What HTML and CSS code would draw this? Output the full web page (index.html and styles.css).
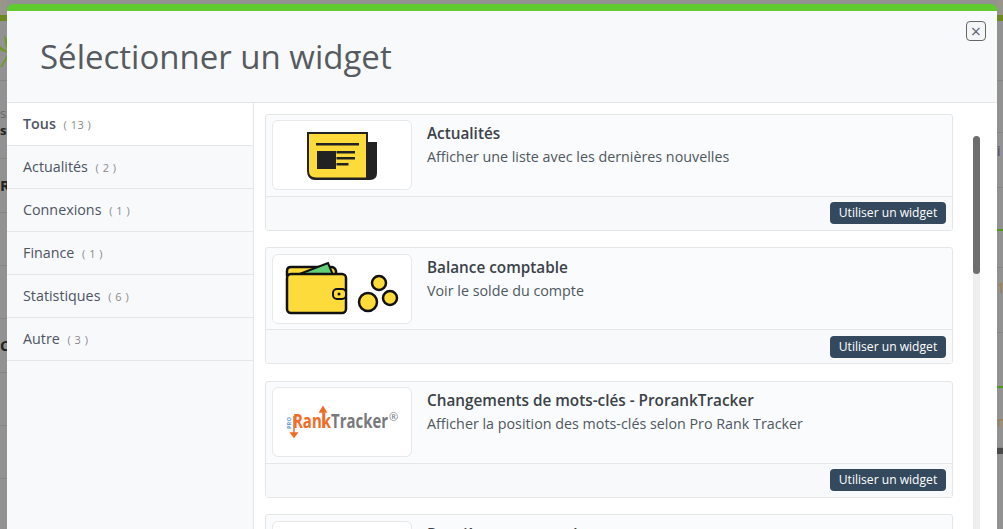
FILE: index.html
```html
<!DOCTYPE html>
<html lang="fr">
<head>
  <meta charset="UTF-8">
  <title>Sélectionner un widget</title>
  <link rel="stylesheet" href="styles.css">
</head>
<body>

  <div class="page-edge page-edge-left">
    <div class="edge-row edge-logo">
      <svg class="edge-leaf" width="7" height="40" viewBox="0 0 7 40">
        <path d="M4 0L7 4V14L5 10ZM0 11L7 16V18L0 15ZM0 32L7 20V24L2 32Z" fill="#6f9a2c"/>
      </svg>
    </div>
    <div class="edge-row edge-h1"><span class="edge-small">sh</span><b>st</b></div>
    <div class="edge-row edge-h2"><b>R</b></div>
    <div class="edge-row edge-h3"></div>
    <div class="edge-row edge-h3"></div>
    <div class="edge-row edge-h4"><b>C</b></div>
    <div class="edge-row edge-h3"></div>
    <div class="edge-row edge-h3"></div>
  </div>

  <div class="modal">
    <div class="modal-header">
      <h1 class="modal-title">Sélectionner un widget</h1>
      <button class="close-btn">&times;</button>
    </div>

    <div class="modal-body">
      <div class="sidebar">
        <div class="cat active">Tous <span class="count">( 13 )</span></div>
        <div class="cat">Actualités <span class="count">( 2 )</span></div>
        <div class="cat">Connexions <span class="count">( 1 )</span></div>
        <div class="cat">Finance <span class="count">( 1 )</span></div>
        <div class="cat">Statistiques <span class="count">( 6 )</span></div>
        <div class="cat">Autre <span class="count">( 3 )</span></div>
      </div>

      <div class="widget-list">
        <div class="widget">
          <div class="widget-body">
            <div class="widget-img">
              <svg width="138" height="68" viewBox="0 0 138 68">
                <path d="M92 21H104V52Q104 59 97 59H42Q35 59 35 52V30Z" fill="#222"/>
                <path d="M35 12H94V57.500H43Q35 57.500 35 50Z" fill="#fddb3a" stroke="#222" stroke-width="2"/>
                <rect x="43" y="22" width="43" height="2.500" fill="#222"/>
                <rect x="44" y="30" width="19" height="18" fill="#222"/>
                <rect x="63.500" y="30" width="18.500" height="2.500" fill="#222"/>
                <rect x="63.500" y="36" width="18.500" height="2.500" fill="#222"/>
                <rect x="63.500" y="42" width="12" height="2.500" fill="#222"/>
              </svg>
            </div>
            <div class="widget-text">
              <div class="widget-name">Actualités</div>
              <div class="widget-desc">Afficher une liste avec les dernières nouvelles</div>
            </div>
          </div>
          <div class="widget-footer"><button class="use-btn">Utiliser un widget</button></div>
        </div>

        <div class="widget">
          <div class="widget-body">
            <div class="widget-img">
              <svg width="138" height="68" viewBox="0 0 138 68">
                <path d="M14 20V16Q14 12 18 12H58Q62 12 63 16V20Z" fill="#fddb3a" stroke="#111" stroke-width="2.500"/>
                <path d="M24 20L55 8L60 20Z" fill="#5fcf78" stroke="#111" stroke-width="2"/>
                <rect x="14" y="19" width="59" height="39" rx="4" fill="#fddb3a" stroke="#111" stroke-width="2.500"/>
                <rect x="60" y="34" width="13" height="10" rx="4" fill="#fddb3a" stroke="#111" stroke-width="2"/>
                <circle cx="66" cy="39" r="1.500" fill="#111"/>
                <circle cx="106" cy="28" r="7" fill="#fddb3a" stroke="#111" stroke-width="2.500"/>
                <circle cx="95" cy="47" r="9" fill="#fddb3a" stroke="#111" stroke-width="2.500"/>
                <circle cx="117" cy="43" r="7" fill="#fddb3a" stroke="#111" stroke-width="2.500"/>
              </svg>
            </div>
            <div class="widget-text">
              <div class="widget-name">Balance comptable</div>
              <div class="widget-desc">Voir le solde du compte</div>
            </div>
          </div>
          <div class="widget-footer"><button class="use-btn">Utiliser un widget</button></div>
        </div>

        <div class="widget">
          <div class="widget-body">
            <div class="widget-img">
              <svg width="138" height="68" viewBox="0 0 138 68">
                <text class="logo-pro" transform="translate(18 41) rotate(-90)" textLength="12" lengthAdjust="spacingAndGlyphs">PRO</text>
                <path d="M21 28V47M18 45L21 49L24 45Z" fill="#f26b21" stroke="#f26b21" stroke-width="1.500"/>
                <path d="M50 40V22M47 24L50 19L53 24Z" fill="#f26b21" stroke="#f26b21" stroke-width="1.500"/>
                <text class="logo-rank" x="20" y="40" textLength="38" lengthAdjust="spacingAndGlyphs">Rank</text>
                <text class="logo-tracker" x="58" y="40" textLength="57" lengthAdjust="spacingAndGlyphs">Tracker</text>
                <text class="logo-reg" x="116" y="33">®</text>
              </svg>
            </div>
            <div class="widget-text">
              <div class="widget-name">Changements de mots-clés - ProrankTracker</div>
              <div class="widget-desc">Afficher la position des mots-clés selon Pro Rank Tracker</div>
            </div>
          </div>
          <div class="widget-footer"><button class="use-btn">Utiliser un widget</button></div>
        </div>

        <div class="widget">
          <div class="widget-body">
            <div class="widget-img"></div>
            <div class="widget-text">
              <div class="widget-name">Dernières commandes</div>
            </div>
          </div>
        </div>
      </div>

      <div class="scroll-track"><div class="scroll-thumb"></div></div>
    </div>
  </div>

  <div class="page-edge page-edge-right">
    <div class="edge-row edge-logo"></div>
    <div class="edge-row edge-r1"></div>
    <div class="edge-row edge-r2"><span class="edge-letter">i</span></div>
    <div class="edge-row edge-r3 edge-green"></div>
    <div class="edge-row edge-r4"></div>
    <div class="edge-row edge-r5"><span class="edge-letter edge-orange">1</span></div>
    <div class="edge-row edge-r6 edge-green"></div>
    <div class="edge-row edge-r7"><span class="edge-letter edge-orange">n</span></div>
    <div class="edge-dark"></div>
  </div>

</body>
</html>
```

FILE: styles.css
```css
html, body {
  height: 100%;
}
body {
  margin: 0;
  display: flex;
  overflow: hidden;
  background-color: #929292;
  font-family: "Open Sans", sans-serif;
  color: #444b52;
}

/* what shows of the page under the modal */
.page-edge {
  flex: none;
  overflow: hidden;
  padding-top: 15px;
  background: linear-gradient(#98968a 0, #98968a 15px, #929292 15px);
}
.page-edge-left {
  width: 7px;
  direction: rtl;
}
.page-edge-right {
  width: 6px;
}
.edge-row {
  box-sizing: border-box;
  border-bottom: 1px solid #858585;
  white-space: nowrap;
  direction: ltr;
}
.edge-logo {
  height: 66px;
  border-top: 6px solid #6f8a1c;
}
.edge-leaf {
  display: block;
  margin-top: 14px;
}
.edge-h1 { height: 78px; padding-top: 25px; font-size: 13px; line-height: 14px; }
.edge-h2 { height: 54px; padding-top: 16px; font-size: 15px; line-height: 20px; }
.edge-h3 { height: 53px; }
.edge-h4 { height: 54px; padding-top: 16px; font-size: 15px; line-height: 20px; }
.edge-row b {
  display: block;
  color: #222;
}
.edge-small {
  display: block;
  margin-bottom: 3px;
  color: #666;
}
.edge-r1 { height: 52px; }
.edge-r2 { height: 55px; padding-top: 6px; }
.edge-r3 { height: 43px; }
.edge-r4 { height: 37px; }
.edge-r5 { height: 65px; padding-top: 8px; }
.edge-r6 { height: 55px; }
.edge-r7 { height: 60px; padding-top: 22px; }
.edge-letter {
  font-size: 14px;
  line-height: 20px;
  color: #4a4a66;
}
.edge-orange {
  color: #a8793c;
}
.edge-green {
  border-bottom: 2px solid #4f9a1e;
}
.edge-dark {
  height: 6px;
  background-color: #4a4a4a;
}

/* modal */
.modal {
  flex: 1;
  display: flex;
  flex-direction: column;
  margin-top: 4px;
  background-color: #fff;
  border-top: 7px solid #5fcb2e;
  border-radius: 6px 6px 0 0;
  overflow: hidden;
}
.modal-header {
  flex: none;
  display: flex;
  justify-content: space-between;
  align-items: flex-start;
  height: 91px;
  box-sizing: border-box;
  padding: 10px 11px 0 33px;
  background-color: #f8f9fa;
}
.modal-title {
  margin: 0;
  padding-top: 12px;
  font-size: 33px;
  line-height: 48px;
  font-weight: 400;
  color: #555b60;
}
.close-btn {
  width: 20px;
  height: 20px;
  padding: 0;
  background-color: #f3f5f7;
  border: 1px solid #666;
  border-radius: 4px;
  color: #667;
  font-family: "Open Sans", sans-serif;
  font-size: 18px;
  line-height: 16px;
}
.modal-body {
  flex: 1;
  display: flex;
  min-height: 0;
  border-top: 1px solid #e4e6e8;
}

/* categories */
.sidebar {
  flex: none;
  width: 247px;
  box-sizing: border-box;
  background-color: #f8f9fb;
  border-right: 1px solid #e4e6e8;
}
.cat {
  height: 43px;
  box-sizing: border-box;
  padding: 11px 16px 0;
  border-bottom: 1px solid #e4e6e8;
  font-size: 14.300px;
  line-height: 20px;
  color: #4d5563;
}
.cat.active {
  background-color: #fff;
  font-weight: 600;
}
.count {
  margin-left: 4px;
  font-size: 11px;
  font-weight: 400;
  letter-spacing: 0.500px;
  color: #8a8a8a;
}

/* widgets */
.widget-list {
  flex: 1;
  overflow: hidden;
  padding-top: 10.600px;
  padding-left: 11px;
}
.widget {
  height: 117px;
  box-sizing: border-box;
  margin-bottom: 16.500px;
  border: 1px solid #e4e6e8;
  border-radius: 3px;
  background-color: #f9fbfd;
}
.widget-body {
  display: flex;
  height: 82px;
  box-sizing: border-box;
  padding: 5.500px 6px;
  border-bottom: 1px solid #e4e6e8;
}
.widget-img {
  flex: none;
  width: 140px;
  height: 70px;
  box-sizing: border-box;
  background-color: #fff;
  border: 1px solid #e6e8ea;
  border-radius: 6px;
}
.widget-img svg {
  display: block;
}
.widget-text {
  padding: 3px 0 0 15px;
}
.widget-name {
  font-size: 15.300px;
  line-height: 20px;
  font-weight: 600;
  color: #3c4248;
}
.widget-desc {
  margin-top: 4px;
  font-size: 14.300px;
  line-height: 20px;
  color: #4f5860;
}
.widget-footer {
  display: flex;
  justify-content: flex-end;
  height: 33px;
  box-sizing: border-box;
  padding: 5.450px 6px 0 0;
  background-color: #f8f9fa;
}
.use-btn {
  width: 116px;
  height: 22px;
  padding: 0 0 1px;
  border: none;
  border-radius: 4px;
  background-color: #34495e;
  color: #fff;
  font-family: "Open Sans", sans-serif;
  font-size: 12.100px;
}

.scroll-track {
  flex: none;
  width: 7px;
  margin: 33px 17px 0 20px;
  background-color: #eee;
  border-radius: 4px 4px 0 0;
}
.scroll-thumb {
  height: 138px;
  background-color: #6e6e6e;
  border-radius: 4px;
}

/* logo text */
.logo-pro {
  font: bold 5px "Open Sans", sans-serif;
  fill: #5aa0dc;
}
.logo-rank {
  font: bold 19px "Open Sans", sans-serif;
  fill: #f26b21;
}
.logo-tracker {
  font: bold 19px "Open Sans", sans-serif;
  fill: #77797c;
}
.logo-reg {
  font: 11px "Open Sans", sans-serif;
  fill: #77797c;
}
```
